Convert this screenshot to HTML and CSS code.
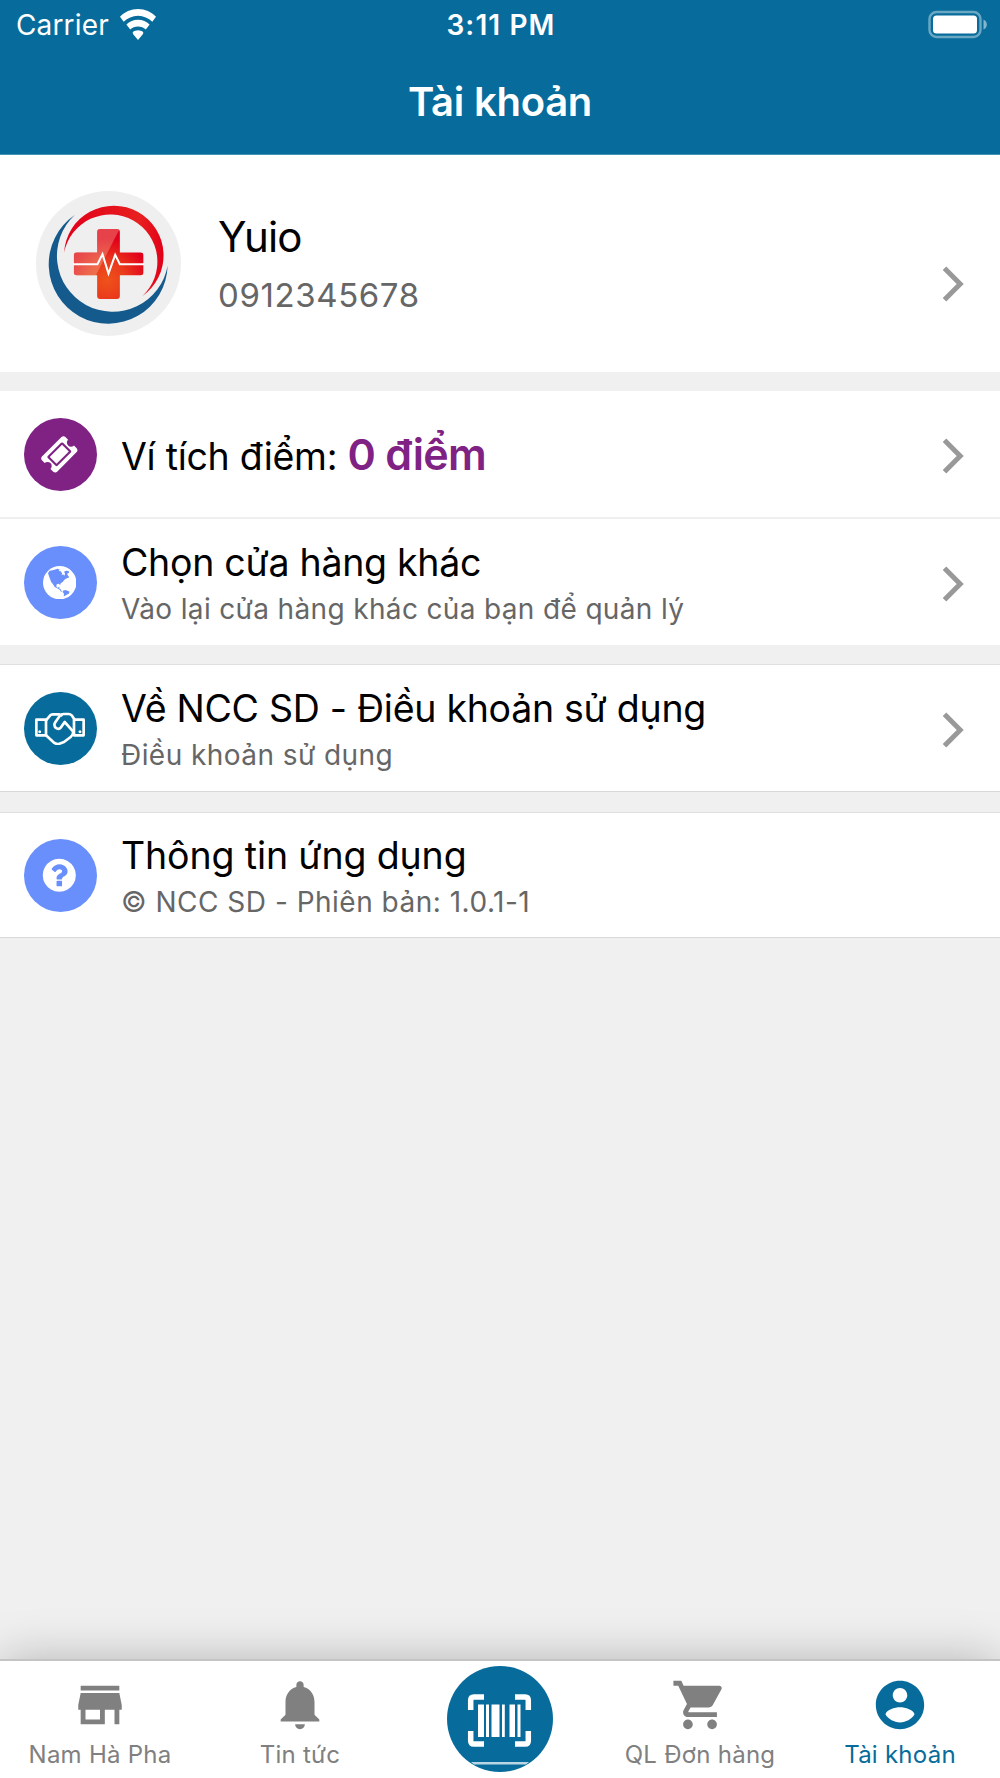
FILE: index.html
```html
<!DOCTYPE html>
<html lang="vi">
<head>
<meta charset="utf-8">
<title>Tài khoản</title>
<link rel="stylesheet" href="styles.css">
</head>
<body>
<div class="screen">
  <header class="header">
    <div class="status">
      <div class="status-left"><span class="carrier">Carrier</span>
        <svg class="wifi" viewBox="0 0 36 31"><path d="M18 0C25 0 31.500 3 36 7.700L32.300 12.800C28.500 9 23.500 6.700 18 6.700S7.500 9 3.700 12.800L0 7.700C4.500 3 11 0 18 0zM18 10.800c4.500 0 8.600 1.700 11.600 4.600l-3.800 5C23.700 18.500 21 17.400 18 17.400s-5.700 1.100-7.800 3l-3.800-5C9.400 12.500 13.500 10.800 18 10.800zM18 21.300c2 0 3.800.7 5.300 1.900L23 25l-5 6-5-6-.3-1.800C14.200 22 16 21.300 18 21.300z"/></svg>
      </div>
      <span class="time">3:11 PM</span>
      <svg class="battery" viewBox="0 0 60 30"><rect x="1.500" y="2" width="51" height="25" rx="7" fill="none" stroke="#6aa7c3" stroke-width="2.400"/><rect x="5" y="5.500" width="44" height="18" rx="3.500" fill="#fff"/><path d="M55.500 9.500q3.300 1.500 3.300 5t-3.300 5z" fill="#83b6cd"/></svg>
    </div>
    <h1 class="title">Tài khoản</h1>
  </header>

  <section class="profile">
    <svg class="avatar" viewBox="49 33 434 434">
      <defs>
        <radialGradient id="cross" gradientUnits="userSpaceOnUse" cx="262" cy="300" r="125"><stop offset="0" stop-color="#ef531a"/><stop offset=".45" stop-color="#ea3a1c"/><stop offset="1" stop-color="#e1001a"/></radialGradient>
        <linearGradient id="ring" x1="0" y1="0" x2="1" y2="0"><stop offset="0" stop-color="#e1001a"/><stop offset=".5" stop-color="#e5131c"/><stop offset=".75" stop-color="#e8201f"/><stop offset="1" stop-color="#e1001a"/></linearGradient>
        <clipPath id="plus"><rect x="232" y="147" width="68" height="209" rx="9"/><rect x="162" y="217" width="209" height="68" rx="9"/></clipPath>
      </defs>
      <circle cx="266" cy="250" r="217" fill="#efefef"/>
      <path fill="#145a8c" d="M165 105A178 178 0 1 0 443 257A167 167 0 1 1 165 105z"/>
      <path fill="url(#ring)" d="M133 217A149 149 0 1 1 367 348A141 141 0 1 0 133 217z"/>
      <g clip-path="url(#plus)"><path fill="url(#cross)" d="M160 145h213v213H160z"/><path fill="#f5cdb0" fill-opacity=".32" d="M160 145h140L226 290h-66z"/></g>
      <path fill="none" stroke="#fff" stroke-width="6" stroke-linejoin="miter" d="M160 252h73l15-30 18 58 20-56 14 28h73"/>
    </svg>
    <div class="profile-text">
      <div class="name">Yuio</div>
      <div class="phone">0912345678</div>
    </div>
    <svg class="chevron" viewBox="0 0 22 36"><path d="M2.500 2.200L18.200 18 2.500 33.800"/></svg>
  </section>

  <section class="group">
    <div class="row split">
      <span class="badge purple"><svg class="glyph" viewBox="0 0 1792 1792"><path d="M1024 452l316 316-572 572-316-316zm-211 979l618-618q19-19 19-45t-19-45l-362-362q-18-18-45-18t-45 18l-618 618q-19 19-19 45t19 45l362 362q18 18 45 18t45-18zm889-637l-907 908q-37 37-90.500 37t-90.500-37l-126-126q56-56 56-136t-56-136-136-56-136 56l-125-126q-37-37-37-90.500t37-90.500l907-906q37-37 90.500-37t90.500 37l125 125q-56 56-56 136t56 136 136 56 136-56l126 125q37 37 37 90.500t-37 90.500z"/></svg></span>
      <div class="text"><div class="label points"><span class="wallet">Ví tích điểm:</span> <b class="value">0 điểm</b></div></div>
      <svg class="chevron" viewBox="0 0 22 36"><path d="M2.500 2.200L18.200 18 2.500 33.800"/></svg>
    </div>
    <div class="row">
      <span class="badge blue"><svg class="globe" viewBox="0 0 100 100"><circle cx="50" cy="50" r="50" fill="#fff"/><path fill="#698ffc" d="M15 21l5-7 12-2 12-4 6 3-3 4 6 1 4 6-1 6 4-3 4 4 2-6-3-6 6-3 8 1 1 5-6 3 3 6 4 5-7 3-5 2-4 4-4 5-6 4-2 6-3-5-7 2-1 7 4 3 5-3 0 6 4 2 2 5 3 3-4-1-4-6-7-4-8-4-5-8-6-8-3-9-3-7zM60 74l7-2 12 4-1 6-7 4-9 5 1-8-4-5z"/></svg></span>
      <div class="text"><div class="label t2">Chọn cửa hàng khác</div><div class="sub s2">Vào lại cửa hàng khác của bạn để quản lý</div></div>
      <svg class="chevron" viewBox="0 0 22 36"><path d="M2.500 2.200L18.200 18 2.500 33.800"/></svg>
    </div>
  </section>

  <section class="group lined">
    <div class="row">
      <span class="badge teal"><svg class="shake" viewBox="0 0 150 100"><g fill="none" stroke="#fff" stroke-width="8" stroke-linejoin="round" stroke-linecap="round"><path d="M33 23H4v47h27"/><path d="M33 25v44M117 25v43M117 23h29v47h-29"/><path d="M33 25l14-16q3-2 7-2h19l6 3"/><path d="M33 70l25 23q8 5 15 2l14-5 20-15q9-7 7-17L89 30 78 46q-6 7-13 3t-7-11q1-5 4-9l12-17q5-6 12-6h15q5 0 9 4l9 13"/></g><circle cx="14" cy="59" r="4.500" fill="#fff"/><circle cx="135" cy="59" r="4.500" fill="#fff"/></svg></span>
      <div class="text"><div class="label t3">Về NCC SD - Điều khoản sử dụng</div><div class="sub s3">Điều khoản sử dụng</div></div>
      <svg class="chevron" viewBox="0 0 22 36"><path d="M2.500 2.200L18.200 18 2.500 33.800"/></svg>
    </div>
  </section>

  <section class="group lined last">
    <div class="row">
      <span class="badge blue"><svg class="glyph" viewBox="0 0 1792 1792"><path d="M1024 1376v-192q0-14-9-23t-23-9h-192q-14 0-23 9t-9 23v192q0 14 9 23t23 9h192q14 0 23-9t9-23zm256-672q0-88-55.500-163t-138.500-116-170-41q-243 0-371 213-15 24 8 42l132 100q7 6 19 6 16 0 25-12 53-68 86-92 34-24 86-24 48 0 85.500 26t37.500 59q0 38-20 61t-68 45q-63 28-115.500 86.500t-52.500 125.500v36q0 14 9 23t23 9h192q14 0 23-9t9-23q0-19 21.500-49.500t54.500-49.500q32-18 49-28.500t46-35 44.500-48 28-60.500 12.500-81zm384 192q0 209-103 385.500t-279.500 279.500-385.500 103-385.500-103-279.500-279.500-103-385.500 103-385.500 279.500-279.500 385.500-103 385.500 103 279.500 279.500 103 385.500z"/></svg></span>
      <div class="text"><div class="label t4">Thông tin ứng dụng</div><div class="sub s4">© NCC SD - Phiên bản: 1.0.1-1</div></div>
    </div>
  </section>

  <nav class="tabs">
    <div class="tab"><svg class="tab-icon" viewBox="0 0 24 24"><path d="M20 4H4v2h16V4zm1 10v-2l-1-5H4l-1 5v2h1v6h10v-6h4v6h2v-6h1zm-9 4H6v-4h6v4z"/></svg><span>Nam Hà Pha</span></div>
    <div class="tab"><svg class="tab-icon" viewBox="0 0 24 24"><path d="M12 22c1.100 0 2-.9 2-2h-4c0 1.100.9 2 2 2zM18 16v-5.200c0-3-1.700-5.500-4.500-6.200V3.600C13.500 2.700 12.800 2.200 12 2.200s-1.500.5-1.500 1.400v1C7.700 5.300 6 7.800 6 10.800V16l-2 2v.8h16V18z"/></svg><span>Tin tức</span></div>
    <div class="tab scan"><svg class="scan-icon" viewBox="0 0 106 106"><circle cx="53" cy="53" r="53" fill="#076c9b"/><path fill="none" stroke="#fff" stroke-width="5.500" d="M37 31H27q-3.300 0-3.300 3.300V44M68 31h10q3.300 0 3.300 3.300V44M37 78H27q-3.300 0-3.300-3.300V65M68 78h10q3.300 0 3.300-3.300V65"/><path fill="#fff" d="M31 38.500h6V71h-6zM39 38.500h3V71h-3zM44.500 38.500h8V71h-8zM55 38.500h2.800V71H55zM62.500 38.500h5.500V71h-5.500zM70.500 38.500h3V71h-3z"/><path fill="#b8d6e4" d="M24 96h58l-3 2.500H27z"/></svg></div>
    <div class="tab"><svg class="tab-icon" viewBox="0 0 24 24"><path d="M7 18c-1.100 0-1.990.9-1.990 2S5.900 22 7 22s2-.9 2-2-.9-2-2-2zM1 2v2h2l3.600 7.590-1.350 2.450c-.16.280-.25.610-.25.960 0 1.100.9 2 2 2h12v-2H7.420c-.14 0-.25-.11-.25-.25l.03-.12.9-1.630h7.450c.75 0 1.410-.41 1.750-1.030l3.580-6.490c.08-.14.120-.31.120-.48 0-.55-.45-1-1-1H5.210l-.94-2H1zm16 16c-1.100 0-1.990.9-1.990 2s.89 2 1.990 2 2-.9 2-2-.9-2-2-2z"/></svg><span>QL Đơn hàng</span></div>
    <div class="tab active"><svg class="tab-icon" viewBox="0 0 24 24"><path d="M12 2C6.480 2 2 6.480 2 12s4.480 10 10 10 10-4.480 10-10S17.520 2 12 2zm0 3c1.660 0 3 1.340 3 3s-1.340 3-3 3-3-1.340-3-3 1.340-3 3-3zm0 14.200c-2.500 0-4.710-1.280-6-3.220.03-1.990 4-3.080 6-3.080 1.990 0 5.970 1.090 6 3.080-1.290 1.940-3.500 3.220-6 3.220z"/></svg><span>Tài khoản</span></div>
  </nav>
</div>
</body>
</html>
```
FILE: styles.css
```css
* { box-sizing: border-box; }
body { margin: 0; font-family: Inter, "Liberation Sans", sans-serif; background: #f0f0f0; color: #000; }
svg { display: block; flex: none; }
.screen { width: 1000px; height: 1778px; display: flex; flex-direction: column; overflow: hidden; white-space: nowrap; }

.header { height: 155px; flex: none; background: #076c9b; border-bottom: 1px solid #4595b8; color: #fff; }
.status { height: 50px; padding: 1px 12px 0 16px; display: grid; grid-template-columns: 1fr auto 1fr; align-items: center; font-size: 28px; line-height: 49px; }
.status-left { display: flex; align-items: center; gap: 11px; }
.carrier { letter-spacing: .15px; }
.wifi { width: 36px; height: 31px; fill: #fff; margin-top: -2px; }
.time { font-weight: 600; letter-spacing: 1.1px; margin-left: -2px; }
.battery { width: 60px; height: 30px; justify-self: end; margin-top: -1px; }
.title { margin: 0; padding-top: 27px; text-align: center; font-size: 40px; line-height: 50px; font-weight: 600; letter-spacing: -.25px; }

.profile { height: 217px; flex: none; display: flex; align-items: flex-start; background: #fff; padding: 36px 36px 0 36px; }
.avatar { width: 145px; height: 145px; }
.profile-text { flex: 1; padding: 17px 0 0 37px; line-height: 58px; }
.name { font-size: 42px; letter-spacing: -.9px; }
.phone { font-size: 33px; color: #666; letter-spacing: .6px; }
.chevron { width: 22px; height: 36px; fill: none; stroke: #999; stroke-width: 5; margin-top: 47px; }
.profile .chevron { margin-top: 75px; }

.group { flex: none; margin-top: 19px; background: #fff; }
.lined { border-top: 1px solid #e0e0e0; border-bottom: 1px solid #d9d9d9; }
.lined.last { margin-top: 20px; }
.row { height: 126px; display: flex; align-items: flex-start; padding: 0 36px 0 24px; }
.split { height: 128px; border-bottom: 2px solid #efefef; }
.last .row { height: 124px; }
.badge { width: 73px; height: 73px; flex: none; margin-top: 27px; border-radius: 50%; display: flex; align-items: center; justify-content: center; }
.last .badge { margin-top: 26px; }
.purple { background: #802284; }
.blue { background: #698ffc; }
.teal { background: #076c9b; }
.glyph { width: 38.6px; height: 38.6px; fill: #fff; margin-right: 2px; }
.globe { width: 33.4px; height: 33.4px; margin-right: 2px; }
.shake { width: 50px; height: 33.3px; margin-right: 1px; }
.text { flex: 1; padding: 21px 0 0 24px; line-height: 46px; }
.last .text { padding-top: 20px; }
.label { font-size: 37.5px; letter-spacing: -.28px; }
.t4 { letter-spacing: -.13px; }
.points { margin-top: 22px; }
.value { font-size: 43px; line-height: 0; font-weight: 600; letter-spacing: -.75px; color: #802284; }
.sub { font-size: 28px; color: #666; letter-spacing: .35px; }
.s3 { letter-spacing: .44px; }
.s4 { letter-spacing: .5px; }

.tabs { height: 119px; flex: none; margin-top: auto; display: grid; grid-template-columns: repeat(5, 1fr); background: #fff; border-top: 2px solid #c4c4c4; box-shadow: 0 0 48px rgba(0, 0, 0, .25); }
.tab { display: flex; flex-direction: column; align-items: center; padding-top: 15px; font-size: 24px; line-height: 30px; gap: 6px; color: #808080; letter-spacing: .25px; }
.tab-icon { width: 58px; height: 58px; fill: currentColor; margin-right: 1px; }
.active { color: #076c9b; }
.scan { padding-top: 5px; }
.scan-icon { width: 106px; height: 106px; }
```
